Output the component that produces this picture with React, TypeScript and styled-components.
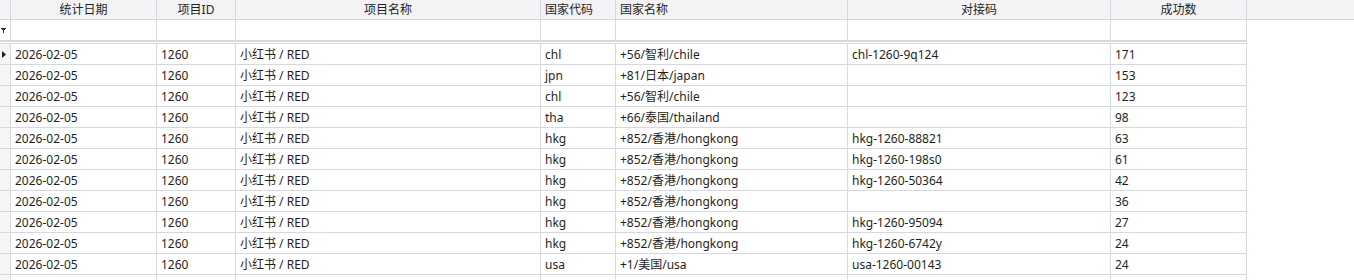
import styled, { createGlobalStyle } from 'styled-components';

const GlobalStyle = createGlobalStyle`
  html, body {
    margin: 0;
    padding: 0;
    overflow: hidden;
    background: #ffffff;
  }
  body {
    font-family: 'Noto Sans', 'Noto Sans CJK SC', sans-serif;
    font-size: 12px;
    color: #1f1f24;
  }
`;

const LINE = '#d7d7de';
const HEAD_BG = '#f3f3f5';

type Column = { key: string; title: string; width: number; align: 'left' | 'center' };

const columns: Column[] = [
  { key: 'date', title: '统计日期', width: 146, align: 'center' },
  { key: 'id', title: '项目ID', width: 79, align: 'center' },
  { key: 'name', title: '项目名称', width: 305, align: 'center' },
  { key: 'code', title: '国家代码', width: 75, align: 'left' },
  { key: 'country', title: '国家名称', width: 232, align: 'left' },
  { key: 'dock', title: '对接码', width: 263, align: 'center' },
  { key: 'count', title: '成功数', width: 136, align: 'center' },
];

type Row = Record<string, string>;

const mk = (code: string, country: string, dock: string, count: string): Row => ({
  date: '2026-02-05',
  id: '1260',
  name: '小红书 / RED',
  code,
  country,
  dock,
  count,
});

const rows: Row[] = [
  mk('chl', '+56/智利/chile', 'chl-1260-9q124', '171'),
  mk('jpn', '+81/日本/japan', '', '153'),
  mk('chl', '+56/智利/chile', '', '123'),
  mk('tha', '+66/泰国/thailand', '', '98'),
  mk('hkg', '+852/香港/hongkong', 'hkg-1260-88821', '63'),
  mk('hkg', '+852/香港/hongkong', 'hkg-1260-198s0', '61'),
  mk('hkg', '+852/香港/hongkong', 'hkg-1260-50364', '42'),
  mk('hkg', '+852/香港/hongkong', '', '36'),
  mk('hkg', '+852/香港/hongkong', 'hkg-1260-95094', '27'),
  mk('hkg', '+852/香港/hongkong', 'hkg-1260-6742y', '24'),
  mk('usa', '+1/美国/usa', 'usa-1260-00143', '24'),
  // next row is scrolled mostly out of view; only its grid lines show
  {},
];

const App = () => {
  return (
    <>
      <GlobalStyle />
      <Grid>
        <HeaderRow>
          <Indicator $bg={HEAD_BG} />
          {columns.map((c) => (
            <HeaderCell key={c.key} $width={c.width} $align={c.align}>
              {c.title}
            </HeaderCell>
          ))}
          <HeaderFiller />
        </HeaderRow>
        <FilterRow>
          <Indicator $bg="#ffffff">
            <FilterIcon width="6" height="6" viewBox="0 0 6 6">
              <path d="M0 0h5v1H0zM1 1h3v1H1zM2 2h1v3H2z" fill="#2b2b30" />
            </FilterIcon>
          </Indicator>
          {columns.map((c) => (
            <Cell key={c.key} $width={c.width} />
          ))}
        </FilterRow>
        <Body>
          {rows.map((r, i) => (
            <DataRow key={i}>
              <Indicator $bg="#f5f5f7">
                {i === 0 && (
                  <Arrow width="4" height="7" viewBox="0 0 4 7">
                    <path d="M0 0L4 3.5L0 7z" fill="#1f1f24" />
                  </Arrow>
                )}
              </Indicator>
              {columns.map((c) => (
                <Cell key={c.key} $width={c.width}>
                  {r[c.key]}
                </Cell>
              ))}
            </DataRow>
          ))}
        </Body>
      </Grid>
    </>
  );
};

export default App;

const Grid = styled.div`
  width: 1354px;
  height: 280px;
  overflow: hidden;
`;

const HeaderRow = styled.div`
  display: flex;
  height: 20px;
  background: ${HEAD_BG};
  border-bottom: 1px solid ${LINE};
  box-sizing: border-box;
`;

const Indicator = styled.div<{ $bg: string }>`
  flex: 0 0 11px;
  box-sizing: border-box;
  border-right: 1px solid ${LINE};
  background: ${(p) => p.$bg};
  display: flex;
  align-items: center;
  padding-left: 1px;
`;

const HeaderCell = styled.div<{ $width: number; $align: 'left' | 'center' }>`
  flex: 0 0 ${(p) => p.$width}px;
  box-sizing: border-box;
  border-right: 1px solid ${LINE};
  line-height: 19px;
  text-align: ${(p) => p.$align};
  padding: 0 4px;
  color: #1f1f24;
  white-space: nowrap;
`;

const HeaderFiller = styled.div`
  flex: 1;
`;

const FilterRow = styled.div`
  display: flex;
  width: 1247px;
  height: 22px;
  border-bottom: 2px solid ${LINE};
  box-sizing: border-box;
`;

const Body = styled.div`
  width: 1247px;
  margin-top: 1px;
  border-top: 1px solid ${LINE};
`;

const DataRow = styled.div`
  display: flex;
  height: 21px;
  border-bottom: 1px solid ${LINE};
  box-sizing: border-box;
`;

const Cell = styled.div<{ $width: number }>`
  flex: 0 0 ${(p) => p.$width}px;
  box-sizing: border-box;
  border-right: 1px solid ${LINE};
  line-height: 20px;
  padding: 1px 0 0 4px;
  white-space: nowrap;
  overflow: hidden;
`;

const FilterIcon = styled.svg`
  display: block;
  margin-top: 1px;
`;

const Arrow = styled.svg`
  display: block;
  margin-left: 1px;
`;
